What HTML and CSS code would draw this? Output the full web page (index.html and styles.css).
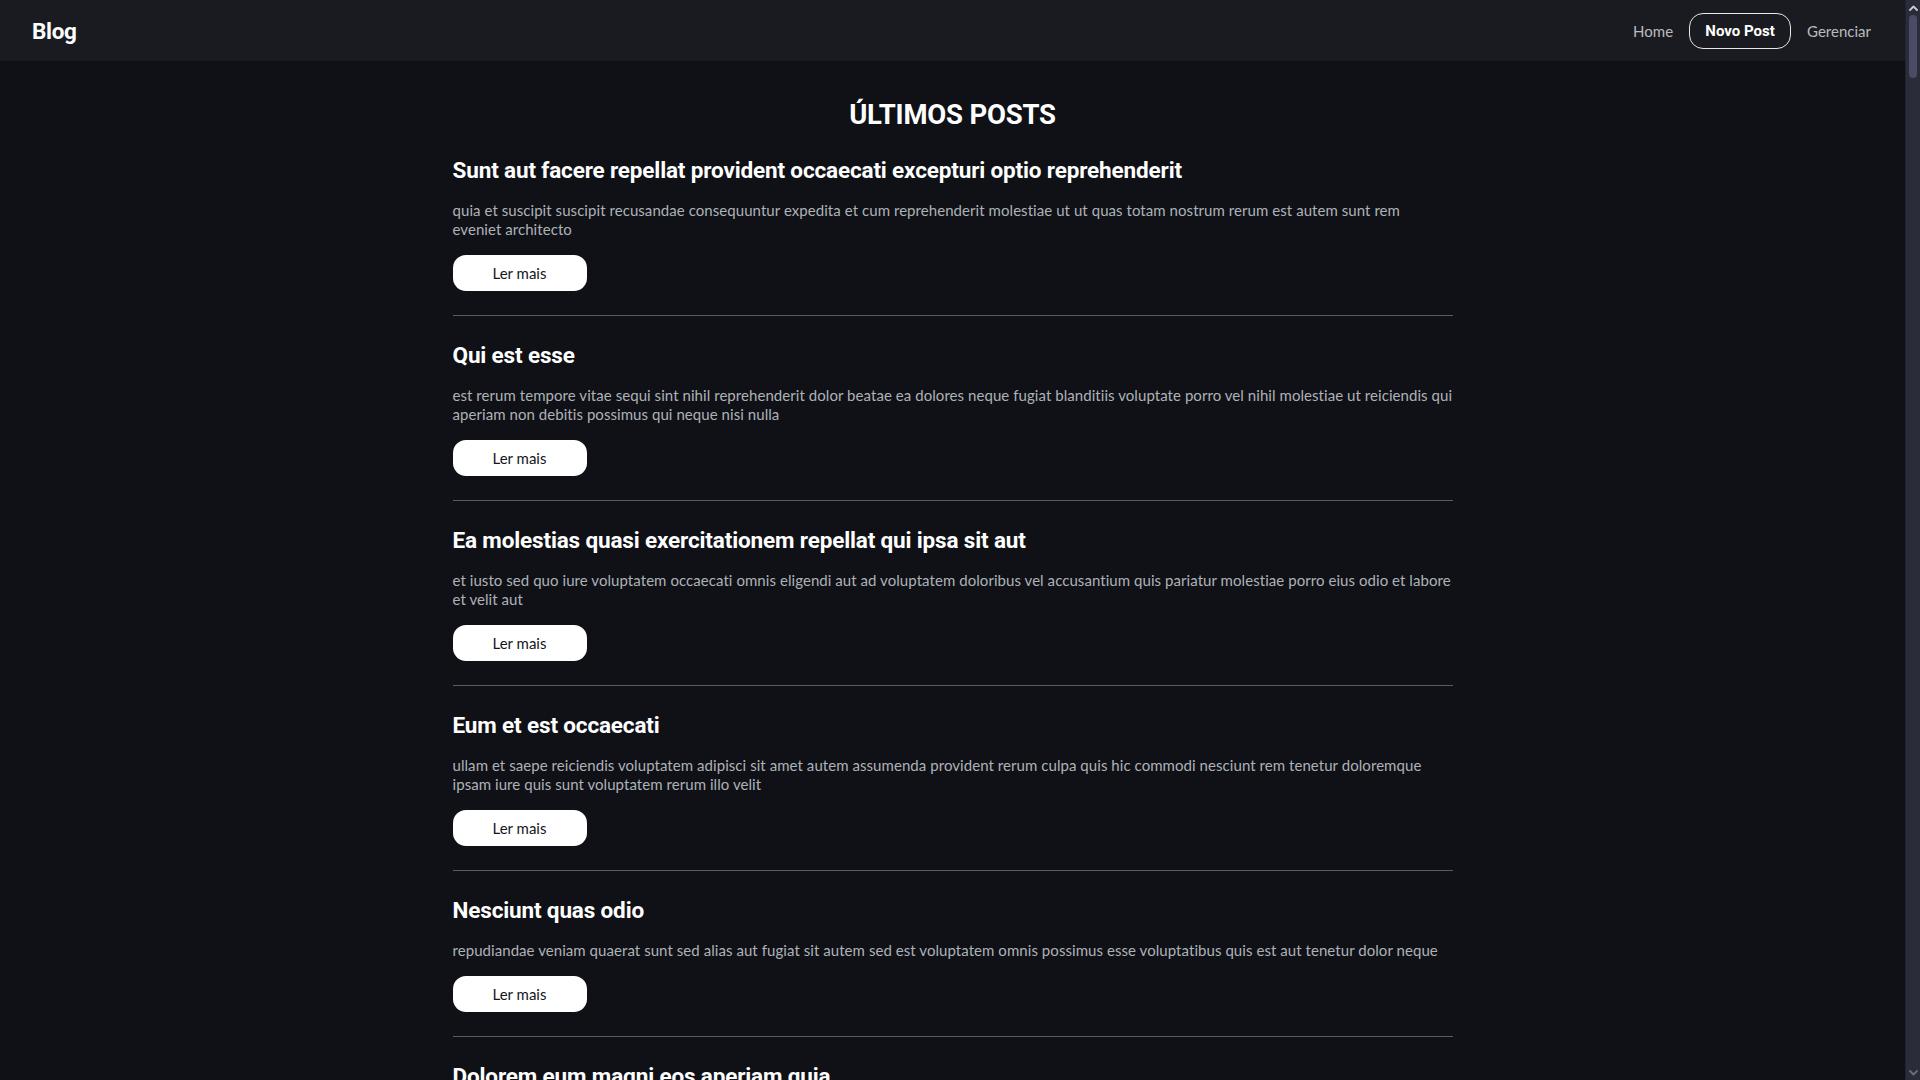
FILE: index.html
```html
<!DOCTYPE html>
<html lang="pt-BR">
<head>
<meta charset="utf-8">
<title>Blog</title>
<link rel="stylesheet" href="styles.css">
</head>
<body>
<div class="page">
  <header class="topbar">
    <a class="brand" href="#">Blog</a>
    <nav class="nav">
      <a class="nav-link" href="#">Home</a>
      <a class="nav-link nav-link--active" href="#">Novo Post</a>
      <a class="nav-link" href="#">Gerenciar</a>
    </nav>
  </header>
  <main class="content">
    <h1 class="page-title">ÚLTIMOS POSTS</h1>
    <section class="posts">
      <article class="post">
        <h2 class="post-title">sunt aut facere repellat provident occaecati excepturi optio reprehenderit</h2>
        <p class="post-body">quia et suscipit suscipit recusandae consequuntur expedita et cum reprehenderit molestiae ut ut quas totam nostrum rerum est autem sunt rem eveniet architecto</p>
        <a class="btn-read" href="#">Ler mais</a>
      </article>
      <article class="post">
        <h2 class="post-title">qui est esse</h2>
        <p class="post-body">est rerum tempore vitae sequi sint nihil reprehenderit dolor beatae ea dolores neque fugiat blanditiis voluptate porro vel nihil molestiae ut reiciendis qui aperiam non debitis possimus qui neque nisi nulla</p>
        <a class="btn-read" href="#">Ler mais</a>
      </article>
      <article class="post">
        <h2 class="post-title">ea molestias quasi exercitationem repellat qui ipsa sit aut</h2>
        <p class="post-body">et iusto sed quo iure voluptatem occaecati omnis eligendi aut ad voluptatem doloribus vel accusantium quis pariatur molestiae porro eius odio et labore et velit aut</p>
        <a class="btn-read" href="#">Ler mais</a>
      </article>
      <article class="post">
        <h2 class="post-title">eum et est occaecati</h2>
        <p class="post-body">ullam et saepe reiciendis voluptatem adipisci sit amet autem assumenda provident rerum culpa quis hic commodi nesciunt rem tenetur doloremque ipsam iure quis sunt voluptatem rerum illo velit</p>
        <a class="btn-read" href="#">Ler mais</a>
      </article>
      <article class="post">
        <h2 class="post-title">nesciunt quas odio</h2>
        <p class="post-body">repudiandae veniam quaerat sunt sed alias aut fugiat sit autem sed est voluptatem omnis possimus esse voluptatibus quis est aut tenetur dolor neque</p>
        <a class="btn-read" href="#">Ler mais</a>
      </article>
      <article class="post">
        <h2 class="post-title">dolorem eum magni eos aperiam quia</h2>
        <p class="post-body">ut aspernatur corporis harum nihil quis provident sequi mollitia nobis aliquid molestiae perspiciatis et ea nemo ab reprehenderit accusantium quas voluptate dolores velit et doloremque molestiae</p>
        <a class="btn-read" href="#">Ler mais</a>
      </article>
      <article class="post">
        <h2 class="post-title">magnam facilis autem</h2>
        <p class="post-body">dolore placeat quibusdam ea quo vitae magni quis enim qui quis quo nemo aut saepe quidem repellat excepturi ut quia sunt ut sequi eos ea sed quas</p>
        <a class="btn-read" href="#">Ler mais</a>
      </article>
      <article class="post">
        <h2 class="post-title">dolorem dolore est ipsam</h2>
        <p class="post-body">dignissimos aperiam dolorem qui eum facilis quibusdam animi sint suscipit qui sint possimus cum quaerat magni maiores excepturi ipsam ut commodi dolor voluptatum modi aut vitae</p>
        <a class="btn-read" href="#">Ler mais</a>
      </article>
    </section>
  </main>
</div>
<div class="scrollbar" aria-hidden="true">
  <span class="sb-arrow sb-arrow--up">
    <svg width="9" height="6" viewBox="0 0 9 6"><path d="M1 5 L4.5 1.5 L8 5" fill="none" stroke="currentColor" stroke-width="1.8" stroke-linecap="round" stroke-linejoin="round"/></svg>
  </span>
  <div class="sb-track"><div class="sb-thumb"></div></div>
  <span class="sb-arrow sb-arrow--down">
    <svg width="9" height="6" viewBox="0 0 9 6"><path d="M1 1 L4.5 4.5 L8 1" fill="none" stroke="currentColor" stroke-width="1.8" stroke-linecap="round" stroke-linejoin="round"/></svg>
  </span>
</div>
</body>
</html>
```
FILE: styles.css
```css
* { box-sizing: border-box; }
html, body { height: 100%; }
body {
  margin: 0;
  display: flex;
  overflow: hidden;
  background: #0f1116;
  color: #ffffff;
  font-family: Lato, "Noto Sans", sans-serif;
}
a { text-decoration: none; color: inherit; }

.page {
  flex: 1;
  min-width: 0;
  height: 100%;
  overflow: hidden;
}

/* fake browser scrollbar (dark theme) */
.scrollbar {
  width: 15px;
  flex: none;
  height: 100%;
  display: flex;
  flex-direction: column;
  background: #2a2c39;
  border-left: 1px solid #22232d;
}
.sb-arrow {
  height: 15px;
  display: flex;
  align-items: center;
  justify-content: center;
  flex: none;
}
.sb-arrow--up { color: #c9cad3; }
.sb-arrow--down { color: #6c6d7c; }
.sb-track {
  flex: 1;
  display: flex;
  justify-content: center;
}
.sb-thumb {
  width: 8px;
  height: 63px;
  border-radius: 4px;
  background: #4a4c66;
}

.topbar {
  height: 61px;
  background: #1a1b20;
  display: flex;
  align-items: center;
  justify-content: space-between;
  padding: 0 32px;
}
.brand {
  font-family: Roboto, "Liberation Sans", sans-serif;
  font-weight: 700;
  font-size: 22.5px;
  color: #ffffff;
  letter-spacing: -0.3px;
}
.nav {
  display: flex;
  align-items: center;
  gap: 14px;
}
.nav-link {
  font-size: 15px;
  color: #b9bbc0;
  padding: 0 2px;
}
.nav-link--active {
  color: #ffffff;
  font-family: Roboto, "Liberation Sans", sans-serif;
  font-weight: 700;
  border: 1px solid #e8e8e8;
  border-radius: 14px;
  height: 36px;
  width: 102px;
  display: flex;
  align-items: center;
  justify-content: center;
  padding: 0;
}

.content {
  width: 1000px;
  margin: 0 auto;
  padding-top: 37px;
}
.page-title {
  margin: 0;
  text-align: center;
  font-family: Roboto, "Liberation Sans", sans-serif;
  font-weight: 700;
  font-size: 27.5px;
  line-height: 33px;
  letter-spacing: -0.2px;
}
.post {
  padding: 24px 0;
  border-bottom: 1px solid #5a5c62;
}
.post-title {
  margin: 0 0 16px;
  font-family: Roboto, "Liberation Sans", sans-serif;
  font-weight: 700;
  font-size: 22.5px;
  line-height: 30px;
  letter-spacing: -0.15px;
}
.post-title::first-letter { text-transform: uppercase; }
.post-body {
  margin: 0 0 16px;
  font-size: 15px;
  line-height: 19px;
  letter-spacing: 0.06px;
  color: #aeb1b8;
}
.btn-read {
  display: flex;
  align-items: center;
  justify-content: center;
  width: 134px;
  height: 36px;
  background: #ffffff;
  color: #14161c;
  border-radius: 13px;
  font-size: 15px;
}
```
